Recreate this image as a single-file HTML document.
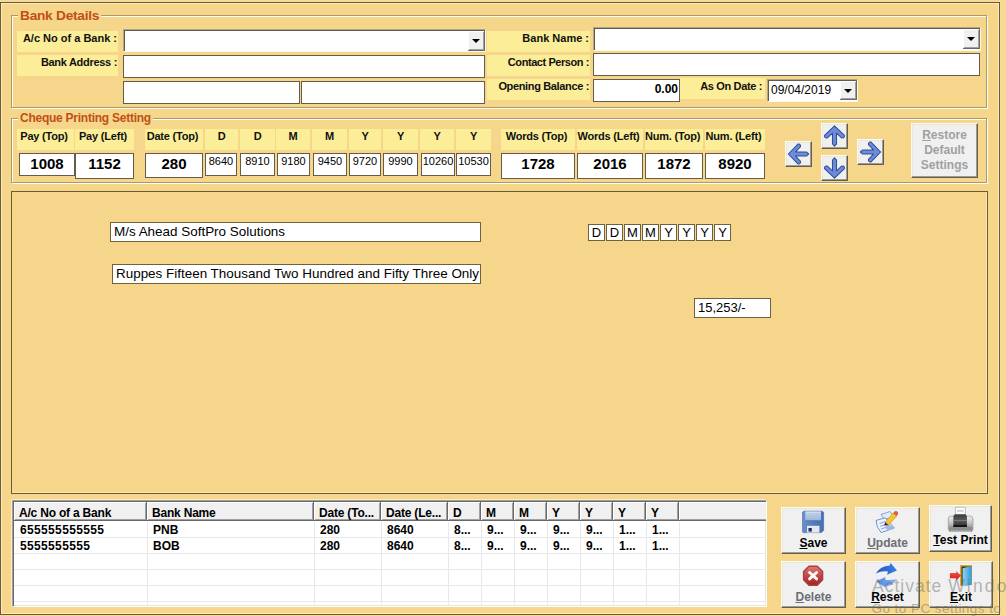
<!DOCTYPE html>
<html><head><meta charset="utf-8">
<style>
*{margin:0;padding:0;box-sizing:border-box}
html,body{width:1006px;height:616px;overflow:hidden;background:#F7DA94;font-family:"Liberation Sans",sans-serif}
.a{position:absolute}
#frame{position:absolute;left:0;top:2px;width:1000px;height:613px;background:#F5D68A;border:1px solid #6B5B33;box-shadow:inset 1px 1px 0 #FCEBC0, inset -1px -1px 0 #FCEBC0}
.grp{position:absolute;border:1px solid #A89A6E;box-shadow:inset 1px 1px 0 #FFFFF0, 1px 1px 0 #FFFFF0}
.gt{position:absolute;background:#F5D68A;color:#C05018;font-weight:bold;font-size:13px;padding:0 2px;white-space:nowrap;line-height:15px}
.lb{position:absolute;background:#FCEE98;font-weight:bold;font-size:11px;color:#111;white-space:nowrap;line-height:13px}
.tb{position:absolute;background:#fff;border:1px solid #655C4A}
.cb{position:absolute;background:#fff;border-top:1px solid #B5A783;border-left:1px solid #B5A783;box-shadow:inset 1px 1px 0 #5F5A4E;border-right:1px solid #FFF9E6;border-bottom:1px solid #FFF9E6}
.dd{position:absolute;background:#F0F0F0;border-right:1px solid #696969;border-bottom:1px solid #696969;box-shadow:inset 1px 1px 0 #fff, inset -1px -1px 0 #A0A0A0}
.dd:after{content:"";position:absolute;left:4px;top:8px;border-left:4px solid transparent;border-right:4px solid transparent;border-top:4px solid #000}
.cl{position:absolute;background:#FCEE98;font-weight:bold;font-size:11px;color:#111;white-space:nowrap;text-align:center;line-height:13px;padding-top:1px;padding-right:3px;letter-spacing:-0.2px}
.ct{position:absolute;background:#fff;border:1px solid #655C4A;text-align:center;white-space:nowrap}
.big{font-weight:bold;font-size:15px;line-height:20px}
.sm{font-size:11px;line-height:15px}
.pl{position:absolute;background:#fff;border:1px solid #6E6140;font-size:13px;white-space:nowrap;line-height:17px;padding-left:3px;color:#000}
.db{position:absolute;background:#fff;border:1px solid #6E6140;width:17px;height:17px;font-size:13px;line-height:15px;text-align:center;color:#000}
.btn{position:absolute;background:#F0F0F0;border:1px solid #FFFCE8;border-right:1px solid #665E4C;border-bottom:1px solid #665E4C;box-shadow:inset -1px -1px 0 #A09C92, inset 1px 1px 0 #E8E6E0}
.ab{position:absolute;width:27px;height:26px}
.bt{position:absolute;left:0;right:0;text-align:center;font-weight:bold;font-size:12px;white-space:nowrap;line-height:15px}
.grid{position:absolute;left:12px;top:500px;width:755px;height:107px;background:#fff;border-top:1px solid #A0A0A0;border-left:1px solid #A0A0A0;border-right:1px solid #fff;border-bottom:1px solid #fff;box-shadow:inset 1px 1px 0 #696969, inset -1px -1px 0 #E3E3E3, -1px -1px 0 #FBEBC4;overflow:hidden}
.hd{position:absolute;top:1px;height:19px;background:#F0F0F0;border-right:1px solid #696969;border-bottom:1px solid #696969;box-shadow:inset 1px 1px 0 #fff, inset -1px -1px 0 #A0A0A0;font-weight:bold;font-size:12px;line-height:14px;padding-left:5px;padding-top:4px;white-space:nowrap;overflow:hidden;color:#000;letter-spacing:-0.2px}
.rw{position:absolute;font-weight:bold;font-size:12px;line-height:16px;white-space:nowrap;color:#000}
.hl{position:absolute;left:1px;right:0;height:1px;background:#E8E8E8}
.vl{position:absolute;top:21px;bottom:0;width:1px;background:#E8E8E8}
.wm1{position:absolute;left:872px;top:576px;font-size:17.5px;letter-spacing:1px;color:rgba(100,100,100,0.46);white-space:nowrap;line-height:20px}
.wm2{position:absolute;left:871.5px;top:601px;font-size:13.5px;letter-spacing:0.45px;color:rgba(100,100,100,0.46);white-space:nowrap;line-height:15px}
</style></head><body>
<div id="frame"></div>

<!-- Bank Details group -->
<div class="grp" style="left:11px;top:15px;width:976px;height:93px"></div>
<div class="gt" style="left:18px;top:8px;font-size:13.7px;letter-spacing:-0.25px">Bank Details</div>
<div class="lb" style="left:17px;top:31px;width:101px;height:21px;text-align:right;padding:1px 1px 0 0">A/c No of a Bank :</div>
<div class="lb" style="left:17px;top:55px;width:101px;height:21px;text-align:right;padding:1px 1px 0 0;letter-spacing:-0.3px">Bank Address :</div>
<div class="cb" style="left:123px;top:29px;width:363px;height:23px"><div class="dd" style="right:0;top:1px;width:17px;height:20px"></div></div>
<div class="tb" style="left:123px;top:55px;width:362px;height:23px"></div>
<div class="tb" style="left:123px;top:81px;width:177px;height:23px"></div>
<div class="tb" style="left:301px;top:81px;width:184px;height:23px"></div>

<div class="lb" style="left:487px;top:31px;width:103px;height:21px;text-align:right;padding:1px 1px 0 0">Bank Name :</div>
<div class="lb" style="left:487px;top:55px;width:103px;height:21px;text-align:right;padding:1px 1px 0 0;letter-spacing:-0.43px">Contact Person :</div>
<div class="lb" style="left:487px;top:79px;width:103px;height:21px;text-align:right;padding:1px 1px 0 0;letter-spacing:-0.35px">Opening Balance :</div>
<div class="cb" style="left:593px;top:27px;width:388px;height:24px"><div class="dd" style="right:0;top:1px;width:17px;height:20px"></div></div>
<div class="tb" style="left:593px;top:53px;width:387px;height:23px"></div>
<div class="tb" style="left:593px;top:79px;width:87px;height:23px;font-weight:bold;font-size:12px;text-align:right;padding:2px 1px 0 0;line-height:14px">0.00</div>
<div class="lb" style="left:680px;top:78px;width:85px;height:21px;text-align:right;padding:2px 3px 0 0;letter-spacing:-0.35px">As On Date :</div>
<div class="cb" style="left:767px;top:79px;width:91px;height:23px;font-size:12px;padding:3px 0 0 3px;line-height:14px">09/04/2019<div class="dd" style="right:0;top:1px;width:17px;height:19px"></div></div>

<!-- Cheque group -->
<div class="grp" style="left:11px;top:118px;width:976px;height:65px"></div>
<div class="gt" style="left:18px;top:111px;font-size:12px;letter-spacing:-0.25px">Cheque Printing Setting</div>

<div class="cl" style="left:17px;top:129px;width:57px;height:21px">Pay (Top)</div>
<div class="cl" style="left:75px;top:129px;width:59px;height:21px">Pay (Left)</div>
<div class="cl" style="left:145px;top:129px;width:58px;height:21px">Date (Top)</div>
<div class="cl" style="left:205px;top:129px;width:33px;height:21px;padding-right:0">D</div>
<div class="cl" style="left:240px;top:129px;width:35px;height:21px;padding-right:0">D</div>
<div class="cl" style="left:276px;top:129px;width:34px;height:21px;padding-right:0">M</div>
<div class="cl" style="left:312px;top:129px;width:35px;height:21px;padding-right:0">M</div>
<div class="cl" style="left:349px;top:129px;width:32px;height:21px;padding-right:0">Y</div>
<div class="cl" style="left:383px;top:129px;width:35px;height:21px;padding-right:0">Y</div>
<div class="cl" style="left:420px;top:129px;width:34px;height:21px;padding-right:0">Y</div>
<div class="cl" style="left:456px;top:129px;width:35px;height:21px;padding-right:0">Y</div>
<div class="cl" style="left:501px;top:129px;width:74px;height:21px">Words (Top)</div>
<div class="cl" style="left:577px;top:129px;width:66px;height:21px">Words (Left)</div>
<div class="cl" style="left:645px;top:129px;width:58px;height:21px">Num. (Top)</div>
<div class="cl" style="left:705px;top:129px;width:60px;height:21px">Num. (Left)</div>

<div class="ct big" style="left:19px;top:153px;width:56px;height:23px">1008</div>
<div class="ct big" style="left:75px;top:153px;width:59px;height:26px">1152</div>
<div class="ct big" style="left:145px;top:153px;width:58px;height:25px">280</div>
<div class="ct sm" style="left:205px;top:153px;width:32px;height:23px">8640</div>
<div class="ct sm" style="left:240px;top:153px;width:35px;height:23px">8910</div>
<div class="ct sm" style="left:277px;top:153px;width:33px;height:23px">9180</div>
<div class="ct sm" style="left:313px;top:153px;width:34px;height:23px">9450</div>
<div class="ct sm" style="left:349px;top:153px;width:32px;height:23px">9720</div>
<div class="ct sm" style="left:383px;top:153px;width:35px;height:23px">9990</div>
<div class="ct sm" style="left:421px;top:153px;width:34px;height:23px">10260</div>
<div class="ct sm" style="left:456px;top:153px;width:35px;height:23px">10530</div>
<div class="ct big" style="left:501px;top:153px;width:74px;height:26px">1728</div>
<div class="ct big" style="left:577px;top:153px;width:66px;height:26px">2016</div>
<div class="ct big" style="left:645px;top:153px;width:58px;height:26px">1872</div>
<div class="ct big" style="left:705px;top:153px;width:60px;height:26px">8920</div>

<!-- arrows -->
<div class="btn ab" style="left:785px;top:141px;width:27px;height:26px"><svg class="a" style="left:0;top:0" width="25" height="24" viewBox="0 0 26 26"><path transform="rotate(-90 13 13)" d="M13 2 L23.8 12.4 Q24.2 14 22.8 15 L21 15.2 L15.2 9.8 L15.2 21.5 L13 24 L10.8 21.5 L10.8 9.8 L5 15.2 L3.2 15 Q1.8 14 2.2 12.4 Z" fill="#6A8CDA" stroke="#2F4C94" stroke-width="1.1" stroke-linejoin="round"/></svg></div>
<div class="btn ab" style="left:821px;top:123px;width:27px;height:26px"><svg class="a" style="left:0;top:0" width="25" height="24" viewBox="0 0 26 26"><path transform="rotate(0 13 13)" d="M13 2 L23.8 12.4 Q24.2 14 22.8 15 L21 15.2 L15.2 9.8 L15.2 21.5 L13 24 L10.8 21.5 L10.8 9.8 L5 15.2 L3.2 15 Q1.8 14 2.2 12.4 Z" fill="#6A8CDA" stroke="#2F4C94" stroke-width="1.1" stroke-linejoin="round"/></svg></div>
<div class="btn ab" style="left:821px;top:155px;width:27px;height:26px"><svg class="a" style="left:0;top:0" width="25" height="24" viewBox="0 0 26 26"><path transform="rotate(180 13 13)" d="M13 2 L23.8 12.4 Q24.2 14 22.8 15 L21 15.2 L15.2 9.8 L15.2 21.5 L13 24 L10.8 21.5 L10.8 9.8 L5 15.2 L3.2 15 Q1.8 14 2.2 12.4 Z" fill="#6A8CDA" stroke="#2F4C94" stroke-width="1.1" stroke-linejoin="round"/></svg></div>
<div class="btn ab" style="left:857px;top:139px;width:27px;height:26px"><svg class="a" style="left:0;top:0" width="25" height="24" viewBox="0 0 26 26"><path transform="rotate(90 13 13)" d="M13 2 L23.8 12.4 Q24.2 14 22.8 15 L21 15.2 L15.2 9.8 L15.2 21.5 L13 24 L10.8 21.5 L10.8 9.8 L5 15.2 L3.2 15 Q1.8 14 2.2 12.4 Z" fill="#6A8CDA" stroke="#2F4C94" stroke-width="1.1" stroke-linejoin="round"/></svg></div>
<div class="btn" style="left:911px;top:123px;width:67px;height:55px;color:#A0A0A0;font-weight:bold;font-size:12px;line-height:15px;text-align:center;padding-top:4px"><u>R</u>estore<br>Default<br>Settings</div>

<!-- middle panel -->
<div class="a" style="left:11px;top:191px;width:977px;height:303px;border:1px solid #6B5B33;box-shadow:inset -1px -1px 0 #FCE8B4"></div>
<div class="pl" style="left:110px;top:222px;width:371px;height:20px;font-size:13.45px">M/s Ahead SoftPro Solutions</div>
<div class="pl" style="left:112px;top:264px;width:369px;height:20px;font-size:13.45px">Ruppes Fifteen Thousand Two Hundred and Fifty Three Only</div>
<div class="db" style="left:588px;top:224px">D</div>
<div class="db" style="left:606px;top:224px">D</div>
<div class="db" style="left:624px;top:224px">M</div>
<div class="db" style="left:642px;top:224px">M</div>
<div class="db" style="left:660px;top:224px">Y</div>
<div class="db" style="left:678px;top:224px">Y</div>
<div class="db" style="left:696px;top:224px">Y</div>
<div class="db" style="left:714px;top:224px">Y</div>
<div class="pl" style="left:694px;top:298px;width:77px;height:20px">15,253/-</div>

<!-- grid -->
<div class="grid">
 <div class="hd" style="left:1px;width:133px">A/c No of a Bank</div>
 <div class="hd" style="left:134px;width:167px">Bank Name</div>
 <div class="hd" style="left:301px;width:67px">Date (To...</div>
 <div class="hd" style="left:368px;width:67px">Date (Le...</div>
 <div class="hd" style="left:435px;width:33px">D</div>
 <div class="hd" style="left:468px;width:33px">M</div>
 <div class="hd" style="left:501px;width:33px">M</div>
 <div class="hd" style="left:534px;width:33px">Y</div>
 <div class="hd" style="left:567px;width:33px">Y</div>
 <div class="hd" style="left:600px;width:33px">Y</div>
 <div class="hd" style="left:633px;width:33px">Y</div>
 <div class="hd" style="left:666px;width:100px;border-right:none"></div>
 <div class="hl" style="top:36px"></div> <div class="hl" style="top:52px"></div> <div class="hl" style="top:68px"></div> <div class="hl" style="top:84px"></div> <div class="hl" style="top:100px"></div>
 <div class="vl" style="left:134px"></div> <div class="vl" style="left:301px"></div> <div class="vl" style="left:368px"></div> <div class="vl" style="left:435px"></div> <div class="vl" style="left:468px"></div> <div class="vl" style="left:501px"></div> <div class="vl" style="left:534px"></div> <div class="vl" style="left:567px"></div> <div class="vl" style="left:600px"></div> <div class="vl" style="left:633px"></div> <div class="vl" style="left:666px"></div>
 <div class="rw" style="left:7px;top:21px;letter-spacing:0.35px">655555555555</div>
 <div class="rw" style="left:140px;top:21px">PNB</div>
 <div class="rw" style="left:307px;top:21px">280</div>
 <div class="rw" style="left:374px;top:21px">8640</div>
 <div class="rw" style="left:441px;top:21px">8...</div>
 <div class="rw" style="left:474px;top:21px">9...</div>
 <div class="rw" style="left:507px;top:21px">9...</div>
 <div class="rw" style="left:540px;top:21px">9...</div>
 <div class="rw" style="left:573px;top:21px">9...</div>
 <div class="rw" style="left:606px;top:21px">1...</div>
 <div class="rw" style="left:639px;top:21px">1...</div>
 <div class="rw" style="left:7px;top:37px;letter-spacing:0.35px">5555555555</div>
 <div class="rw" style="left:140px;top:37px">BOB</div>
 <div class="rw" style="left:307px;top:37px">280</div>
 <div class="rw" style="left:374px;top:37px">8640</div>
 <div class="rw" style="left:441px;top:37px">8...</div>
 <div class="rw" style="left:474px;top:37px">9...</div>
 <div class="rw" style="left:507px;top:37px">9...</div>
 <div class="rw" style="left:540px;top:37px">9...</div>
 <div class="rw" style="left:573px;top:37px">9...</div>
 <div class="rw" style="left:606px;top:37px">1...</div>
 <div class="rw" style="left:639px;top:37px">1...</div>
</div>

<!-- buttons -->
<div class="btn" style="left:781px;top:507px;width:65px;height:47px"><div class="bt" style="top:28px"><u>S</u>ave</div></div>
<div class="btn" style="left:855px;top:507px;width:65px;height:47px"><div class="bt" style="top:28px;color:#6E6E74"><u>U</u>pdate</div></div>
<div class="btn" style="left:929px;top:505px;width:63px;height:47px"><div class="bt" style="top:27px"><u>T</u>est Print</div></div>
<div class="btn" style="left:781px;top:561px;width:65px;height:47px"><div class="bt" style="top:28px;color:#6E6E74"><u>D</u>elete</div></div>
<div class="btn" style="left:855px;top:561px;width:65px;height:47px"><div class="bt" style="top:28px"><u>R</u>eset</div></div>
<div class="btn" style="left:929px;top:561px;width:64px;height:47px"><div class="bt" style="top:28px"><u>E</u>xit</div></div>

<!-- save icon: origin 800,509 -->
<svg class="a" style="left:800px;top:509px" width="26" height="26" viewBox="0 0 26 26">
 <defs><linearGradient id="sv" x1="0" y1="0" x2="1" y2="0"><stop offset="0" stop-color="#6C92CC"/><stop offset="0.5" stop-color="#527CBE"/><stop offset="1" stop-color="#4670B2"/></linearGradient>
 <linearGradient id="svl" x1="0" y1="0" x2="0" y2="1"><stop offset="0" stop-color="#D6E2F2"/><stop offset="1" stop-color="#9AB4DC"/></linearGradient></defs>
 <path d="M2.6 3.2 L3.6 2.2 L22.4 2.2 L23.6 3.4 L23.6 21.4 L21.4 23.6 L3.2 23.6 L2.6 23 Z" fill="url(#sv)" stroke="#4A6CA8" stroke-width="0.7"/>
 <rect x="5.3" y="2.4" width="15.6" height="9.2" fill="url(#svl)"/>
 <rect x="5.3" y="11.4" width="15.6" height="0.8" fill="#4F74B0"/>
 <rect x="6" y="4.6" width="14" height="0.8" fill="#A4B8D8"/><rect x="6" y="6.8" width="14" height="0.8" fill="#A4B8D8"/><rect x="6" y="9" width="14" height="0.8" fill="#A4B8D8"/>
 <rect x="7" y="16.8" width="12.4" height="6.8" fill="#E4E8EE"/>
 <rect x="8.5" y="19" width="3.3" height="3.6" fill="#1C2F62"/>
</svg>
<!-- update icon: origin 872,508 -->
<svg class="a" style="left:872px;top:508px" width="28" height="28" viewBox="0 0 28 28">
 <path d="M9 6.5 L18 3.5 L21.5 8.5 L12.5 11.5 Z" fill="#E2ECFA" stroke="#7C9AD8" stroke-width="0.9"/>
 <path d="M4 12.5 L13.2 9.8 L22.3 20 L9.2 24.5 L5.5 19.2 Z" fill="#EEF4FC" stroke="#6F8FD6" stroke-width="1"/>
 <path d="M7.5 15.5 L13.5 13.5 M8.2 18.3 L15 16.2 M9 21 L16 18.8" stroke="#8AA6DC" stroke-width="1.1"/>
 <ellipse cx="17.5" cy="19.5" rx="3.8" ry="2.3" fill="#9EB8EC"/>
 <path d="M13.2 14.2 L21.2 5 L24.6 8 L16.6 17.2 Z" fill="#F3C530" stroke="#C89418" stroke-width="0.7"/>
 <path d="M21.2 5 L22.6 3.4 Q24 2.4 25.4 3.6 Q26.4 4.8 25.8 6.4 L24.6 8 Z" fill="#E2583A"/>
 <path d="M13.2 14.2 L12.2 17.6 L16.6 17.2 Z" fill="#2E2E2E"/>
</svg>
<!-- printer icon: origin 944,504 -->
<svg class="a" style="left:944px;top:504px" width="34" height="32" viewBox="0 0 34 32">
 <defs><linearGradient id="pb" x1="0" y1="0" x2="0" y2="1"><stop offset="0" stop-color="#F2F2F2"/><stop offset="0.5" stop-color="#C4C4C4"/><stop offset="1" stop-color="#7E7E7E"/></linearGradient>
 <linearGradient id="pd" x1="0" y1="0" x2="0" y2="1"><stop offset="0" stop-color="#3A3A3A"/><stop offset="0.5" stop-color="#5A5A5A"/><stop offset="1" stop-color="#2A2A2A"/></linearGradient></defs>
 <rect x="11.3" y="3.2" width="10" height="9" fill="#FAFAFA" stroke="#B4B4B4" stroke-width="0.8"/>
 <rect x="13" y="6.2" width="6.5" height="1.4" fill="#C4C4C4"/>
 <path d="M4.3 15 Q4.3 12 7.3 12 L25.8 12 Q28.9 12 28.9 15 L28.9 26 L4.3 26 Z" fill="url(#pb)" stroke="#A4A4A4" stroke-width="0.9"/>
 <path d="M9.4 12.5 L10.8 10.2 L21.6 10.2 L22.9 12.5 L22.9 23 L9.4 23 Z" fill="url(#pd)"/>
 <rect x="9.4" y="16" width="13.5" height="1" fill="#7A7A7A"/>
 <rect x="9.4" y="21" width="13.5" height="2" fill="#161616"/>
 <rect x="5" y="23" width="23.3" height="5" rx="1" fill="#8C8C8C"/>
 <rect x="6" y="26.5" width="21" height="1.5" fill="#B4B4B4"/>
</svg>
<!-- delete icon -->
<svg class="a" style="left:798px;top:561px" width="30" height="30" viewBox="0 0 30 30">
 <defs><linearGradient id="dl" x1="0" y1="0" x2="0" y2="1"><stop offset="0" stop-color="#E07A78"/><stop offset="0.5" stop-color="#C24848"/><stop offset="1" stop-color="#9A2424"/></linearGradient></defs>
 <path d="M10.96 5.2 L19.24 5.2 L24.6 10.56 L24.6 18.84 L19.24 24.2 L10.96 24.2 L5.6 18.84 L5.6 10.56 Z" fill="url(#dl)" stroke="#B03C3C" stroke-width="1.4" stroke-linejoin="round"/>
 <path d="M11.6 11.5 L18.6 17.9 M18.6 11.5 L11.6 17.9" stroke="#fff" stroke-width="2.9" stroke-linecap="round"/>
</svg>
<!-- reset icon: origin 872,560 -->
<svg class="a" style="left:872px;top:560px" width="30" height="30" viewBox="0 0 30 30">
 <defs><linearGradient id="r1" x1="0" y1="0" x2="1" y2="0"><stop offset="0" stop-color="#2458C0"/><stop offset="1" stop-color="#3C7EE4"/></linearGradient>
 <linearGradient id="r2" x1="0" y1="0" x2="1" y2="0"><stop offset="0" stop-color="#4A86E4"/><stop offset="1" stop-color="#8DB6F0"/></linearGradient></defs>
 <path d="M3.8 13.6 Q8.2 5.8 17.8 5.4 L18.6 3 L25 10.5 L15 14.8 L16 11.6 Q10 10.6 3.8 13.6 Z" fill="url(#r1)"/>
 <path d="M25 19 Q19.8 26.8 13.6 25.8 L13.9 27.8 L4.2 21.4 L13.2 17 L13.4 19.8 Q19 20.6 25 19 Z" fill="url(#r2)"/>
</svg>
<!-- exit icon: origin 946,562 -->
<svg class="a" style="left:946px;top:562px" width="30" height="30" viewBox="0 0 30 30">
 <defs><linearGradient id="dr" x1="0" y1="0" x2="1" y2="0"><stop offset="0" stop-color="#8ED4F2"/><stop offset="1" stop-color="#2E98D4"/></linearGradient>
 <linearGradient id="ar" x1="0" y1="0" x2="0" y2="1"><stop offset="0" stop-color="#F06060"/><stop offset="1" stop-color="#D81010"/></linearGradient></defs>
 <path d="M14 3 L26 3 L26 23 L14 24 Z" fill="#DCA838"/>
 <path d="M15.5 4.5 L25 4.5 L25 22.5 L15.5 23 Z" fill="#3E2C0C"/>
 <path d="M16.6 6.3 L25.7 3.9 L25.7 22.6 L16.6 24.6 Z" fill="url(#dr)"/>
 <path d="M3.9 11 L10.2 11 L10.2 9 L15.1 13.6 L10.2 18.5 L10.2 16.3 L3.9 16.3 Z" fill="url(#ar)"/>
</svg>

<div class="wm1">Activate <span style="letter-spacing:2.2px">Windows</span></div>
<div class="wm2">Go to PC settings to activate Windows.</div>
</body></html>
